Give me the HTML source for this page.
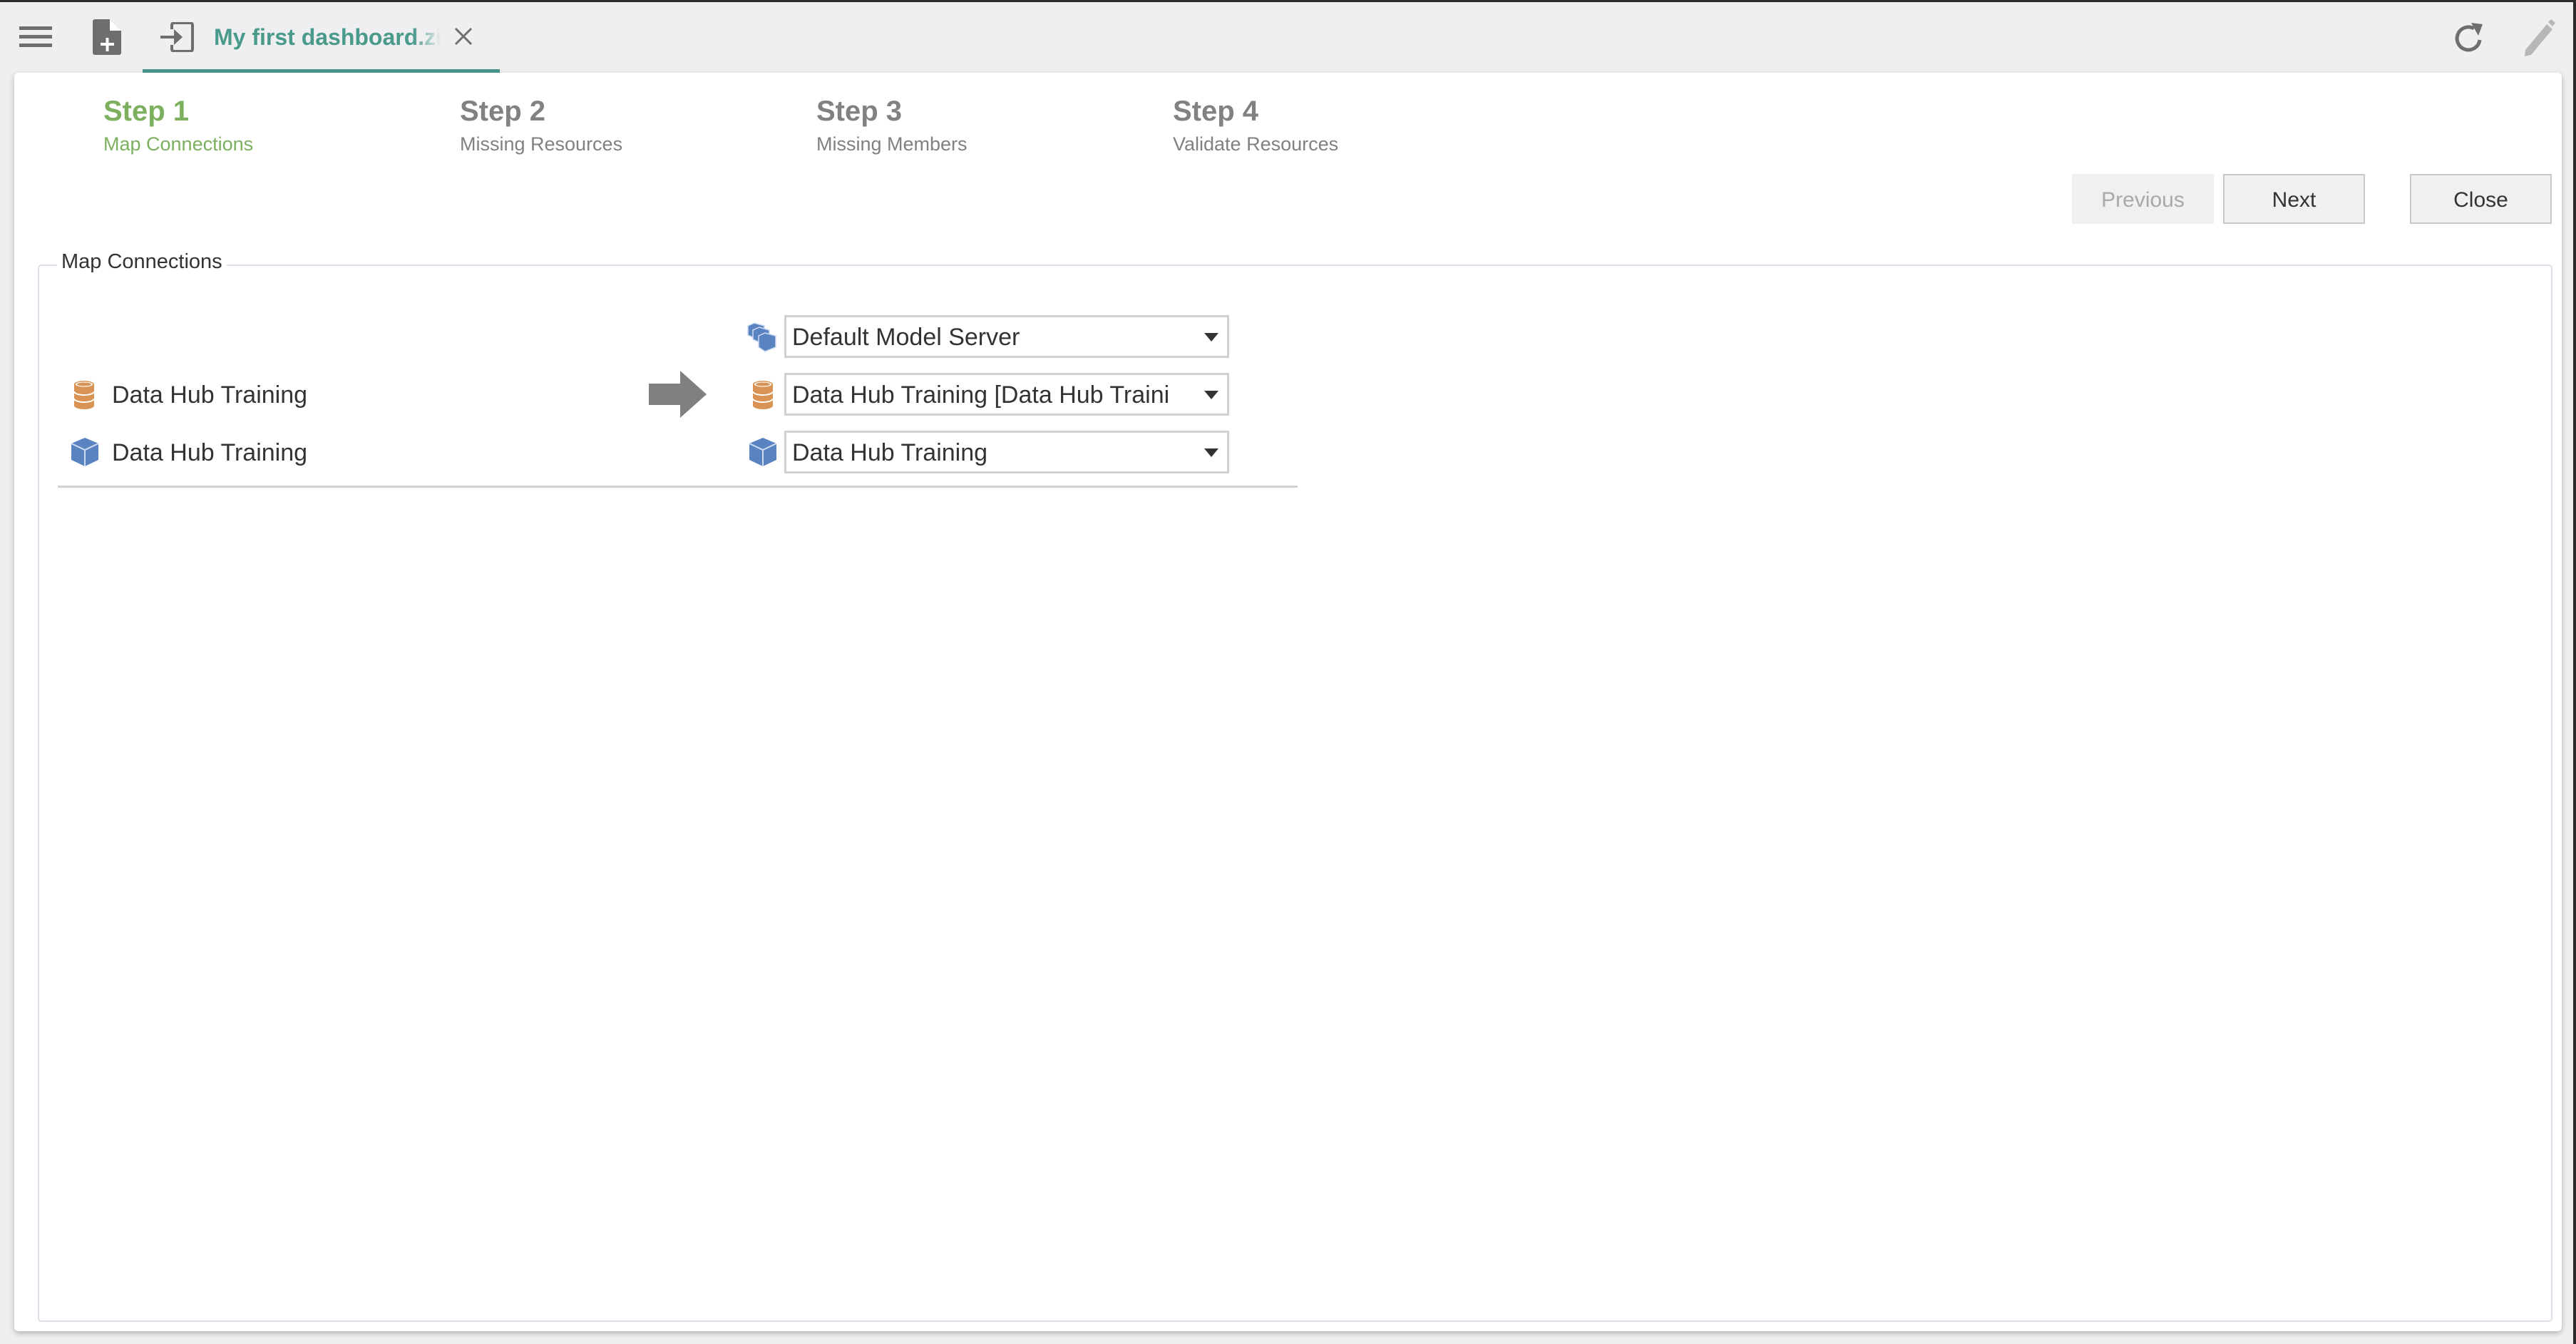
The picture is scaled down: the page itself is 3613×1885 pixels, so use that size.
<!DOCTYPE html>
<html><head><meta charset="utf-8"><style>
*{margin:0;padding:0;box-sizing:border-box}
html,body{width:3613px;height:1885px;overflow:hidden;background:#efeef0;font-family:"Liberation Sans",sans-serif;color:#333}
.a{position:absolute}
#topline{left:0;top:0;width:3613px;height:3px;background:#2b2b2e}
#rstrip{left:3609px;top:0;width:4px;height:1885px;background:#2b2b2e}
#panel{left:20px;top:102px;width:3573px;height:1765px;background:#fff;border-radius:6px;box-shadow:0 3px 8px rgba(0,0,0,.25)}
.step{font-weight:bold;font-size:40px;color:#828082}
.sub{font-size:27px;color:#828082}
.btn{height:70px;border:2px solid #c8c8ca;background:#f0eff1;font-size:30px;text-align:center;line-height:70px;color:#333}
#fs{left:53px;top:371px;width:3527px;height:1483px;border:2px solid #dde0e8;border-radius:5px}
.lbl{font-size:34px;color:#333}
.sel{left:1100px;width:624px;height:60px;border:3px solid #d0d0d2;background:#fff;font-size:34px;line-height:57px;padding-left:8px;color:#333;overflow:hidden;white-space:nowrap}
.car{position:absolute;right:12px;top:22px;width:0;height:0;border-left:10px solid transparent;border-right:10px solid transparent;border-top:12px solid #333}
</style></head><body>
<div class="a" id="topline"></div>
<div class="a" id="rstrip"></div>
<svg class="a" style="left:26px;top:34px" width="48" height="36"><rect x="1" y="3" width="46" height="5" fill="#6e6d70"/><rect x="1" y="15" width="46" height="5" fill="#6e6d70"/><rect x="1" y="27" width="46" height="5" fill="#6e6d70"/></svg>
<svg class="a" style="left:129px;top:26px" width="42" height="52" viewBox="0 0 42 52"><path d="M4 1H25L41 17V48a3 3 0 0 1-3 3H4a3 3 0 0 1-3-3V4a3 3 0 0 1 3-3Z" fill="#6e6d70"/><path d="M25 1V17H41Z" fill="#fff"/><rect x="12" y="34" width="19" height="4" fill="#fff"/><rect x="19.5" y="27" width="4" height="19" fill="#fff"/></svg>
<svg class="a" style="left:224px;top:31px" width="48" height="42" viewBox="0 0 48 42"><path d="M17 10V4a3 3 0 0 1 3-3H43a3 3 0 0 1 3 3V38a3 3 0 0 1-3 3H20a3 3 0 0 1-3-3V32" fill="none" stroke="#6e6d70" stroke-width="4"/><rect x="1" y="19" width="22" height="4" fill="#6e6d70"/><path d="M20 10L32 21L20 32Z" fill="#6e6d70"/></svg>
<div class="a" style="left:300px;top:34px;font-size:32px;font-weight:bold;color:#4a9a8b;width:318px;overflow:hidden;white-space:nowrap;-webkit-mask-image:linear-gradient(90deg,#000 88%,transparent);mask-image:linear-gradient(90deg,#000 88%,transparent)">My first dashboard.zip</div>
<svg class="a" style="left:637px;top:38px" width="26" height="26"><path d="M2 2L24 24M24 2L2 24" stroke="#6e6d70" stroke-width="3"/></svg>
<div class="a" style="left:200px;top:97px;width:501px;height:5px;background:#4a968c"></div>
<svg class="a" style="left:3440px;top:28px" width="46" height="48" viewBox="0 0 46 48"><path d="M38 28A16 16 0 1 1 30 12" fill="none" stroke="#6e6d70" stroke-width="5"/><path d="M26 4L42 6L36 22Z" fill="#6e6d70"/></svg>
<svg class="a" style="left:3538px;top:26px" width="46" height="56" viewBox="0 0 46 56"><path d="M4 44L34 8L42 15L12 51L3 53Z" fill="#b7b6b8"/><path d="M36 5L40 1L46 6L42 11Z" fill="#b7b6b8"/></svg>
<div class="a" id="panel"></div>
<div class="a step" style="left:145px;top:134px;color:#7cb05f">Step 1</div>
<div class="a sub" style="left:145px;top:187px;color:#7cb05f">Map Connections</div>
<div class="a step" style="left:645px;top:134px">Step 2</div>
<div class="a sub" style="left:645px;top:187px">Missing Resources</div>
<div class="a step" style="left:1145px;top:134px">Step 3</div>
<div class="a sub" style="left:1145px;top:187px">Missing Members</div>
<div class="a step" style="left:1645px;top:134px">Step 4</div>
<div class="a sub" style="left:1645px;top:187px">Validate Resources</div>
<div class="a btn" style="left:2906px;top:244px;width:199px;border-color:#f0eff1;color:#a9a8aa">Previous</div>
<div class="a btn" style="left:3118px;top:244px;width:199px">Next</div>
<div class="a btn" style="left:3380px;top:244px;width:199px">Close</div>
<div class="a" id="fs"></div>
<div class="a" style="left:80px;top:351px;background:#fff;padding:0 6px;font-size:29px;color:#333">Map Connections</div>
<svg class="a" style="left:102px;top:533px" width="32" height="42" viewBox="0 0 32 42"><path d="M2 6a14 5 0 0 1 28 0V36a14 5 0 0 1-28 0Z" fill="#d99455"/><ellipse cx="16" cy="6" rx="12" ry="3.5" fill="#fff"/><ellipse cx="16" cy="6" rx="10" ry="2.5" fill="#d99455"/><path d="M2 16a14 5 0 0 0 28 0M2 26a14 5 0 0 0 28 0" fill="none" stroke="#fff" stroke-width="2"/></svg>
<div class="a lbl" style="left:157px;top:535px">Data Hub Training</div>
<svg class="a" style="left:99px;top:613px" width="40" height="42" viewBox="0 0 40 42"><path d="M20 1L39 9V32L20 41L1 32V9Z" fill="#5a83c2"/><path d="M1 9L20 18L39 9M20 18V41" fill="none" stroke="#cfdcf0" stroke-width="2"/></svg>
<div class="a lbl" style="left:157px;top:616px">Data Hub Training</div>
<svg class="a" style="left:910px;top:520px" width="82" height="66" viewBox="0 0 82 66"><path d="M0 18H44V0L81 33L44 66V48H0Z" fill="#807f82"/></svg>
<svg class="a" style="left:1048px;top:452px" width="42" height="42" viewBox="0 0 42 42"><g fill="#5a83c2" stroke="#cfdcf0" stroke-width="1.5"><path d="M10 1L24 5V18L10 22L1 18V5Z"/><path d="M17 7L31 11V24L17 28L8 24V11Z"/><path d="M25 15L40 19V35L25 41L16 35V19Z"/></g></svg>
<div class="a sel" style="top:442px">Default Model Server<div class="car"></div></div>
<svg class="a" style="left:1054px;top:533px" width="32" height="42" viewBox="0 0 32 42"><path d="M2 6a14 5 0 0 1 28 0V36a14 5 0 0 1-28 0Z" fill="#d99455"/><ellipse cx="16" cy="6" rx="12" ry="3.5" fill="#fff"/><ellipse cx="16" cy="6" rx="10" ry="2.5" fill="#d99455"/><path d="M2 16a14 5 0 0 0 28 0M2 26a14 5 0 0 0 28 0" fill="none" stroke="#fff" stroke-width="2"/></svg>
<div class="a sel" style="top:523px">Data Hub Training [Data Hub Trainin<div class="car" style="box-shadow:-30px 0 0 18px #fff"></div></div>
<svg class="a" style="left:1050px;top:613px" width="40" height="42" viewBox="0 0 40 42"><path d="M20 1L39 9V32L20 41L1 32V9Z" fill="#5a83c2"/><path d="M1 9L20 18L39 9M20 18V41" fill="none" stroke="#cfdcf0" stroke-width="2"/></svg>
<div class="a sel" style="top:604px">Data Hub Training<div class="car"></div></div>
<div class="a" style="left:81px;top:681px;width:1739px;height:3px;background:#d0d0d2"></div>
</body></html>
